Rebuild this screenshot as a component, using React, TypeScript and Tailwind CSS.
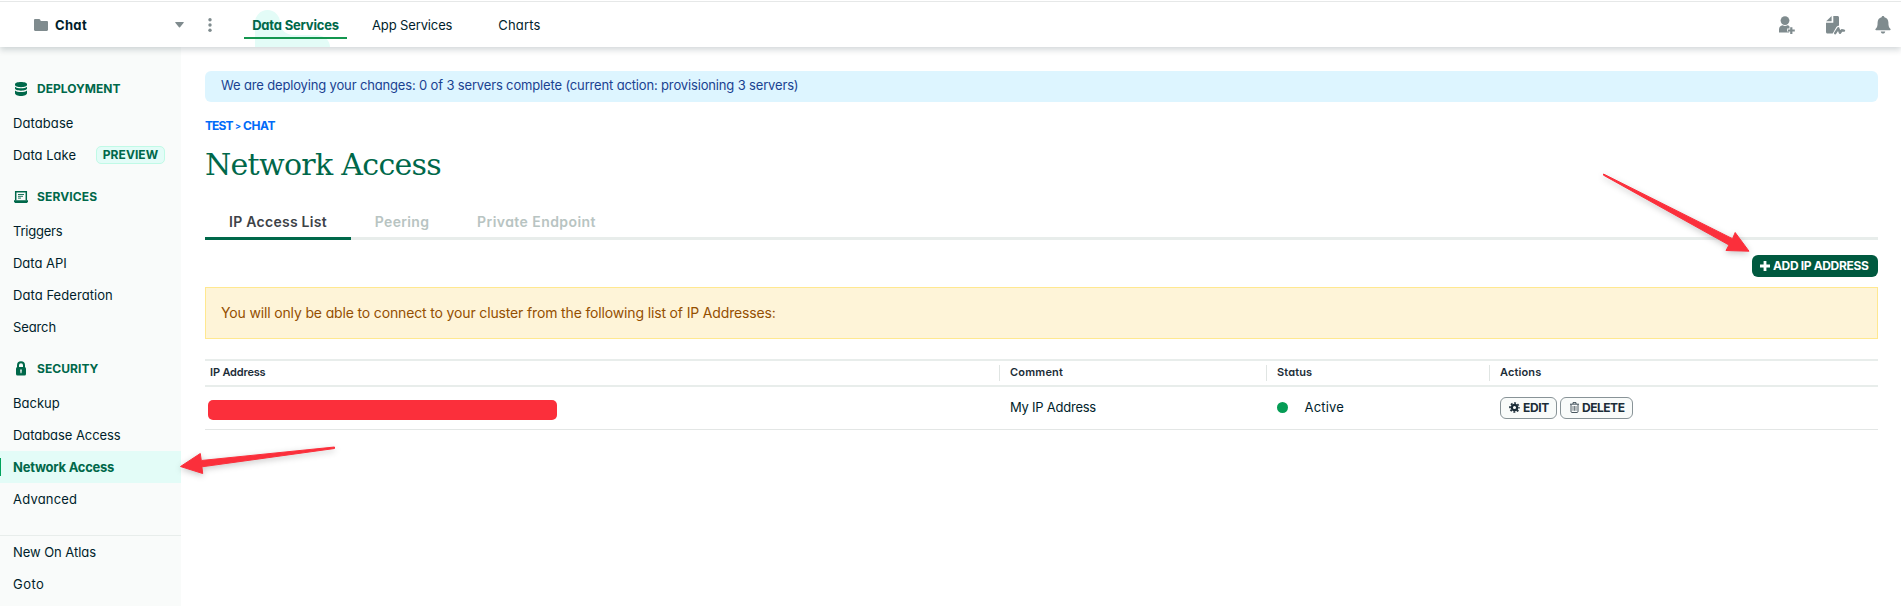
import type { ReactNode } from "react";

type NavItem = { label: string; tracking: string; active?: boolean; badge?: string };

const deployment: NavItem[] = [
  { label: "Database", tracking: "tracking-[0.09px]" },
  { label: "Data Lake", tracking: "tracking-[0.02px]", badge: "PREVIEW" },
];
const services: NavItem[] = [
  { label: "Triggers", tracking: "tracking-[-0.24px]" },
  { label: "Data API", tracking: "tracking-[-0.01px]" },
  { label: "Data Federation", tracking: "tracking-[0.06px]" },
  { label: "Search", tracking: "tracking-[-0.11px]" },
];
const security: NavItem[] = [
  { label: "Backup", tracking: "tracking-[0.02px]" },
  { label: "Database Access", tracking: "tracking-[-0.06px]" },
  { label: "Network Access", tracking: "tracking-[-0.25px]", active: true },
  { label: "Advanced", tracking: "tracking-[0.2px]" },
];
const footer: NavItem[] = [
  { label: "New On Atlas", tracking: "tracking-[-0.06px]" },
  { label: "Goto", tracking: "tracking-[0.5px]" },
];

function NavRow({ item }: { item: NavItem }) {
  return (
    <li
      className={
        item.active
          ? "relative flex h-8 items-center bg-[#e3fcf7] pl-[13px] pt-px font-bold text-[#00684a]"
          : "flex h-8 items-center pl-[13px] pt-px text-[#001e2b]"
      }
    >
      {item.active && <span className="absolute left-0 top-[7px] h-[18px] w-px bg-[#00a35c]" />}
      <span className={item.tracking}>{item.label}</span>
      {item.badge && (
        <span className="mb-px ml-5 flex h-[18px] w-[69px] items-center justify-center rounded-[5px] border border-[#c0fae6] bg-[#e3fcf7] text-xs font-bold tracking-[0.07px] text-[#00684a]">
          {item.badge}
        </span>
      )}
    </li>
  );
}

function Section({ icon, title, tracking, items }: { icon: ReactNode; title: string; tracking: string; items: NavItem[] }) {
  return (
    <section>
      <h2 className="flex h-11 items-center gap-2 pl-[13px] pt-[7px] text-xs font-bold text-[#00684a]">
        <span className="flex w-4 justify-center">{icon}</span>
        <span className={tracking}>{title}</span>
      </h2>
      <ul>
        {items.map((i) => (
          <NavRow key={i.label} item={i} />
        ))}
      </ul>
    </section>
  );
}

const DatabaseIcon = () => (
  <svg width="14" height="16" viewBox="0 0 14 16" fill="currentColor">
    <path d="M1 3.2C1 1.9 3.7 1 7 1s6 .9 6 2.2v.9C13 5.300 10.300 6.200 7 6.200S1 5.300 1 4.100Z" />
    <path d="M1 5.700c1.200 1 3.500 1.500 6 1.500s4.800-.5 6-1.500v1.900c0 1.200-2.700 2.100-6 2.100s-6-.9-6-2.100Z" />
    <path d="M1 9.600c1.200 1 3.500 1.500 6 1.500s4.800-.5 6-1.500v2.700c0 1.500-2.700 2.700-6 2.700s-6-1.200-6-2.700Z" />
  </svg>
);

const LaptopIcon = () => (
  <svg width="14" height="12" viewBox="0 0 14 12" fill="none" stroke="currentColor">
    <path d="M1.700 9.500V.75h10.600V9.500" strokeWidth="1.500" />
    <path d="M0 9.300h14v1.200L13 12H1L0 10.500Z" fill="currentColor" stroke="none" />
    <path d="M4 3.500h6M4 5.300h5M4 7.100h3" strokeWidth=".9" />
  </svg>
);

const LockIcon = () => (
  <svg width="12" height="15" viewBox="0 0 12 15" fill="none">
    <path d="M3 7V4.200a3 3 0 0 1 6 0V7" stroke="currentColor" strokeWidth="2" />
    <rect x="1" y="6" width="10" height="8.500" rx="1.500" fill="currentColor" />
    <path d="M5 8.500h2v1.300l-.4 2.400H5.400L5 9.800Z" fill="#f9fbfa" opacity=".75" />
  </svg>
);

const FolderIcon = () => (
  <svg width="14" height="12" viewBox="0 0 14 12" fill="#7f8b8e">
    <path d="M1.200 0h3.900c.5 0 .8.2 1 .6l.7 1.300h6c.7 0 1.200.5 1.200 1.200v7.700c0 .7-.5 1.200-1.200 1.200H1.200C.5 12 0 11.500 0 10.800V1.200C0 .5.5 0 1.200 0Z" />
  </svg>
);

const InviteIcon = () => (
  <svg width="17" height="18" viewBox="0 0 17 18" fill="#7f8b8e">
    <circle cx="6" cy="4.600" r="4.400" />
    <path d="M0 16.500v-3C0 11.200 1.600 9.400 3.600 9.300c1.500 1 3.300 1 4.800 0 .9.100 1.600.5 2.100 1.100v2.200H8.200v2.800h2v1.100Z" />
    <path d="M11.200 11.200h2.200v2.200h2.400v2.200h-2.400v2.300h-2.200v-2.300H9v-2.200h2.200Z" />
  </svg>
);

const ActivityIcon = () => (
  <svg width="20" height="19" viewBox="0 0 20 19" fill="#7f8b8e">
    <path d="M5.600 0v5.200H.2Z" />
    <path d="M7.300 0h4.200C12.400 0 13 .6 13 1.500v8.300c-1.300 0-2.300.6-2.900 1.700L6.700 17.500H1.500C.6 17.500 0 16.900 0 16V6.800h7.300Z" />
    <path d="M9.200 17.200 12.300 12.300 14 16.800 15.800 14.300l2.200.3" fill="none" stroke="#7f8b8e" strokeWidth="2.400" strokeLinejoin="round" strokeLinecap="round" />
  </svg>
);

const BellIcon = () => (
  <svg width="16" height="18" viewBox="0 0 16 18" fill="#7f8b8e">
    <path d="M8 0c.8 0 1.300.5 1.400 1.200 2.500.6 4 2.600 4 5.300 0 3.600.5 5.200 1.900 6.200.7.500.3 1.500-.5 1.500H1.200c-.8 0-1.200-1-.5-1.500 1.400-1 1.900-2.600 1.900-6.200 0-2.700 1.500-4.700 4-5.300C6.700.5 7.200 0 8 0Z" />
    <path d="M5.800 15.500h4.400c0 1.200-.9 2.100-2.200 2.100s-2.200-.9-2.200-2.100Z" />
  </svg>
);

const GearIcon = () => (
  <svg width="11" height="11" viewBox="0 0 11 11" fill="none" stroke="currentColor">
    <circle cx="5.500" cy="5.500" r="2.700" strokeWidth="2.300" />
    <circle cx="5.500" cy="5.500" r="4.500" strokeWidth="1.700" strokeDasharray="1.900 1.634" strokeDashoffset=".95" />
  </svg>
);

const TrashIcon = () => (
  <svg width="9" height="11" viewBox="0 0 9 11" fill="none" stroke="currentColor" strokeWidth=".8">
    <path d="M0 2.200h9M3 2V.600h3V2M1 2.400V9.500c0 .6.400 1 1 1h5c.6 0 1-.4 1-1V2.400" />
    <path d="M3 4v4.800M4.500 4v4.800M6 4v4.800" strokeWidth=".6" />
  </svg>
);

function TopBar() {
  return (
    <header className="relative z-10 h-[47px] border-t border-white bg-white shadow-[0_3px_6px_rgba(0,30,43,0.17)]">
      <div className="flex h-[46px] items-start border-t border-[#e6e8e8] text-[13px] text-[#001e2b]">
        <div className="flex h-[46px] w-[151px] items-center gap-[7px] pl-[34px]">
          <FolderIcon />
          <span className="pt-px font-bold tracking-[0.33px]">Chat</span>
        </div>
        <div className="flex h-[46px] w-[93px] items-center pl-6">
          <svg width="9" height="6" viewBox="0 0 9 6" fill="#7f8b8e">
            <path d="M.6 0h7.800c.4 0 .5.400.3.700L5 5.200c-.3.400-.7.400-1 0L.3.700C.1.400.2 0 .6 0Z" />
          </svg>
          <svg className="mb-px ml-[24px]" width="4" height="14" viewBox="0 0 4 14" fill="#7f8b8e">
            <circle cx="2" cy="1.700" r="1.700" />
            <circle cx="2" cy="7" r="1.700" />
            <circle cx="2" cy="12.300" r="1.700" />
          </svg>
        </div>
        <nav className="flex">
          <a className="relative flex h-[37px] w-[103px] items-center justify-center border-b-2 border-[#13964f] pt-[13px] font-bold text-[#00684a]">
            <svg className="absolute left-[11px] top-2" width="75" height="37" viewBox="0 0 75 37" fill="#e3fcf7">
              <path d="M0 37V12.500a12.500 12.500 0 0 1 25 0C25 20 31 25 39 25h22c8 0 14 5 14 12Z" />
            </svg>
            <span className="absolute inset-x-0 bottom-[-2px] h-0.5 bg-[#13964f]" />
            <span className="relative tracking-[-0.2px]">Data Services</span>
          </a>
          <a className="flex h-[37px] items-center pl-[25px] pt-[11px] tracking-[-0.13px]">App Services</a>
          <a className="flex h-[37px] items-center pl-[46px] pt-[11px] tracking-[0.18px]">Charts</a>
        </nav>
        <div className="ml-auto flex h-[46px] items-center pr-[10px]">
          <InviteIcon />
          <span className="ml-[30px]"><ActivityIcon /></span>
          <span className="ml-[29px]"><BellIcon /></span>
        </div>
      </div>
    </header>
  );
}

function RowButton({ icon, children, className }: { icon: ReactNode; children: string; className: string }) {
  return (
    <button className={`flex h-[22px] items-center rounded-md border border-[#889397] bg-[#f9fbfa] text-xs font-bold text-[#1c2d38] ${className}`}>
      {icon}
      <span>{children}</span>
    </button>
  );
}

function HeaderCell({ children, className }: { children: string; className: string }) {
  return (
    <th className="p-0 text-left font-semibold">
      <div className={`flex h-4 items-center pb-[2px] ${className}`}>{children}</div>
    </th>
  );
}

function Arrows() {
  return (
    <svg className="pointer-events-none absolute left-0 top-0 z-20 drop-shadow-[0_2px_3px_rgba(0,0,0,0.22)]" width="1901" height="606" viewBox="0 0 1901 606" fill="#fb2f3b" stroke="#fb2f3b" strokeWidth="1" strokeLinejoin="round">
      <path d="M1603.500 174 L1732.500 238.700 L1735.200 232.500 L1749 251.200 L1726 250.500 L1729 245 L1603.500 175.200Z" />
      <path d="M334.500 447 L201.300 460.500 L200.300 453.500 L180.500 466.500 L202.700 473.500 L201.900 466.800 L334.500 448.500Z" />
    </svg>
  );
}

export default function App() {
  return (
    <div className="relative flex h-[606px] w-full flex-col overflow-hidden bg-white font-[Inter,sans-serif] text-[13px] [font-feature-settings:'cv11']">
      <TopBar />
      <div className="flex flex-1">
        <aside className="w-[181px] shrink-0 bg-[#f9fbfa] pt-4">
          <Section icon={<DatabaseIcon />} title="DEPLOYMENT" tracking="tracking-[0.02px]" items={deployment} />
          <Section icon={<LaptopIcon />} title="SERVICES" tracking="tracking-[0.14px]" items={services} />
          <Section icon={<LockIcon />} title="SECURITY" tracking="tracking-[0.06px]" items={security} />
          <ul className="mt-5 border-t border-[#e8edeb]">
            {footer.map((i) => (
              <NavRow key={i.label} item={i} />
            ))}
          </ul>
        </aside>
        <main className="flex flex-1 flex-col pl-6 pr-[23px] pt-6">
          <div className="flex h-[31px] items-center rounded-md bg-[#ddf5ff] pb-px pl-4 tracking-[-0.155px] text-[#1a4291]">
            We are deploying your changes: 0 of 3 servers complete (current action: provisioning 3 servers)
          </div>
          <div className="mt-4 flex h-4 items-center text-xs leading-4 font-bold text-[#016bf8]">
            <span className="w-[30px] tracking-[-0.9px]">TEST</span>
            <span className="w-[8px] text-[9px]">&gt;</span>
            <span className="tracking-[-0.45px]">CHAT</span>
          </div>
          <h1 className="mt-3 h-[37px] whitespace-nowrap font-['DejaVu_Serif',serif] text-[30px] leading-[37px] tracking-[-0.69px] text-[#00684a]">
            Network Access
          </h1>
          <div className="mt-4 flex h-[41px] shrink-0 border-b-[3px] border-[#e8edeb] text-sm font-semibold text-[#b8c4c2]">
            <div className="flex h-[41px] w-[146px] items-center justify-center border-b-[3px] border-[#00684a] pt-[7px] text-[#3d4247]">
              <span className="tracking-[0.26px]">IP Access List</span>
            </div>
            <div className="flex h-[38px] w-[102px] items-center justify-center pt-[7px]">
              <span className="tracking-[0.32px]">Peering</span>
            </div>
            <div className="flex h-[38px] w-[167px] items-center justify-center pt-[7px]">
              <span className="tracking-[0.43px]">Private Endpoint</span>
            </div>
          </div>
          <button className="mt-[15px] flex h-[22px] w-[126px] items-center gap-[3px] self-end rounded-md bg-[#00593f] pl-[8px] text-xs font-bold text-white">
            <svg width="10" height="10" viewBox="0 0 10 10" fill="currentColor">
              <path d="M3.600 0h2.800v3.600H10v2.800H6.400V10H3.600V6.400H0V3.600h3.600Z" />
            </svg>
            <span className="whitespace-nowrap tracking-[-0.35px]">ADD IP ADDRESS</span>
          </button>
          <div className="mt-[10px] flex h-[52px] items-center border border-[#ffe890] bg-[#fef4d8] pl-[15px] text-sm tracking-[-0.15px] text-[#944f01]">
            You will only be able to connect to your cluster from the following list of IP Addresses:
          </div>
          <table className="mt-5 w-full table-fixed border-collapse">
            <colgroup>
              <col className="w-[794px]" />
              <col className="w-[267px]" />
              <col className="w-[223px]" />
              <col />
            </colgroup>
            <thead>
              <tr className="h-[26px] border-y-2 border-[#e8edeb] text-[11px] text-[#1c2d38]">
                <HeaderCell className="pl-[5px] tracking-[-0.17px]">IP Address</HeaderCell>
                <HeaderCell className="border-l border-[#e0e5e3] pl-[10px] tracking-[0.2px]">Comment</HeaderCell>
                <HeaderCell className="border-l border-[#e0e5e3] pl-[10px] tracking-[0.14px]">Status</HeaderCell>
                <HeaderCell className="border-l border-[#e0e5e3] pl-[10px] tracking-[0.12px]">Actions</HeaderCell>
              </tr>
            </thead>
            <tbody>
              <tr className="h-[43px] border-b border-[#e3e6e5] text-[#001e2b]">
                <td className="p-0 pl-[2.500px] pt-[5px]">
                  <div className="h-5 w-[349px] rounded-[5px] bg-[#fb2f3b]" />
                </td>
                <td className="p-0 pl-[11px] tracking-[-0.24px]">My IP Address</td>
                <td className="p-0 pl-[11px]">
                  <div className="flex items-center gap-[16.500px]">
                    <span className="size-[11px] rounded-full bg-[#059c55]" />
                    <span className="tracking-[0.16px]">Active</span>
                  </div>
                </td>
                <td className="p-0 pl-[11px]">
                  <div className="flex gap-[3px]">
                    <RowButton icon={<GearIcon />} className="w-[57px] gap-[3px] pl-2 tracking-[-0.34px]">EDIT</RowButton>
                    <RowButton icon={<TrashIcon />} className="w-[73px] gap-[3px] pl-[9px] tracking-[-0.48px]">DELETE</RowButton>
                  </div>
                </td>
              </tr>
            </tbody>
          </table>
        </main>
      </div>
      <Arrows />
    </div>
  );
}
